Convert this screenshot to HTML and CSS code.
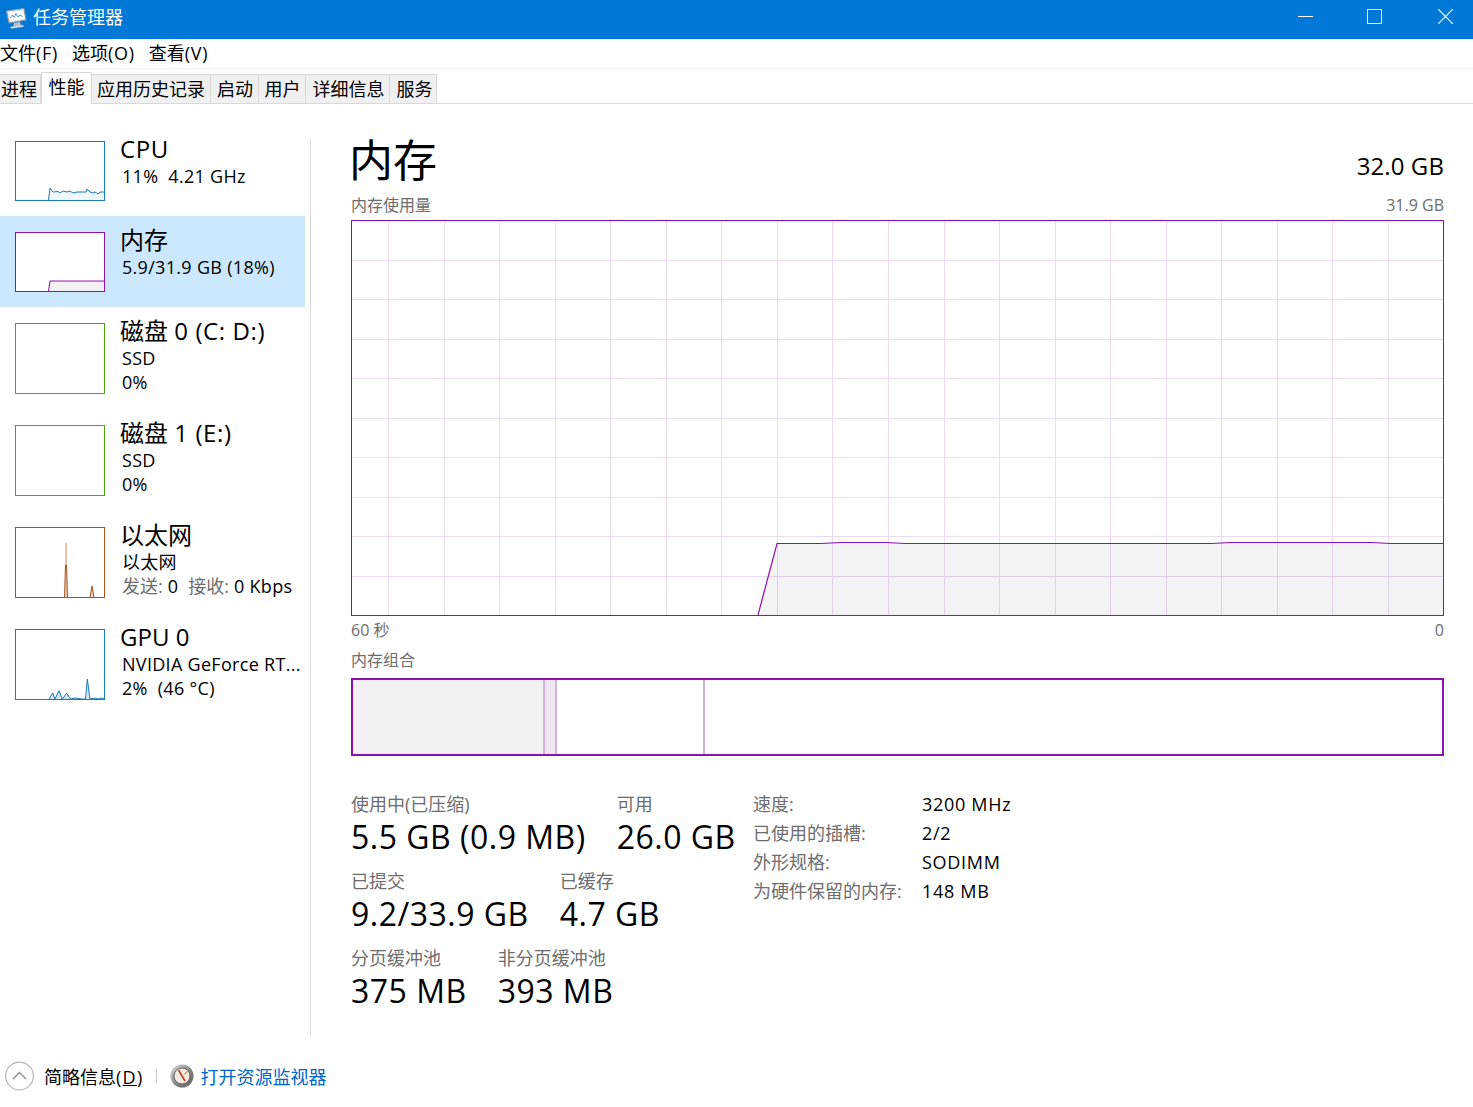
FILE: index.html
```html
<!DOCTYPE html>
<html lang="zh-CN">
<head>
<meta charset="utf-8">
<title>任务管理器</title>
<link rel="stylesheet" href="styles.css">
</head>
<body>
<header class="titlebar">
  <svg class="app-icon" width="22" height="22" viewBox="0 0 22 22">
    <path d="M1.500 4 19 1.500 21 13 4 16Z" fill="#dfe6ee" stroke="#8d99a6"/>
    <path d="M3.500 5.500 17.800 3.500 19.300 11.800 5.200 14.200Z" fill="#fff"/>
    <path d="M5 11 7.500 8 9 10.500 11 6.500 13 10 15 8 17.500 9.500" fill="none" stroke="#4b94d8" stroke-width="1"/>
    <path d="M9 16 15 15 16 18.500 8 20Z" fill="#b9c2cc"/>
    <path d="M5 20 17.500 18 19 19.500 6.500 21.500Z" fill="#eef1f4" stroke="#98a2ad" stroke-width=".5"/>
  </svg>
  <span class="app-title">任务管理器</span>
  <div class="win-controls">
    <svg width="15" height="15" viewBox="0 0 15 15" class="wc-min"><path d="M0 7.500H15" stroke="#fff"/></svg>
    <svg width="15" height="15" viewBox="0 0 15 15" class="wc-max"><rect x=".5" y=".5" width="14" height="14" fill="none" stroke="#fff"/></svg>
    <svg width="15" height="15" viewBox="0 0 15 15" class="wc-close"><path d="M0 0 15 15M15 0 0 15" stroke="#fff" stroke-width="1.200"/></svg>
  </div>
</header>
<nav class="menubar">
  <span>文件<span class="lat-m">(F)</span></span><span>选项<span class="lat-m">(O)</span></span><span>查看<span class="lat-m">(V)</span></span>
</nav>
<div class="tabs">
  <span class="tab t1">进程</span>
  <span class="tab active t2">性能</span>
  <span class="tab t3">应用历史记录</span>
  <span class="tab t4">启动</span>
  <span class="tab t5">用户</span>
  <span class="tab t6">详细信息</span>
  <span class="tab t7">服务</span>
</div>
<div class="content">
  <aside class="sidebar">
    <div class="item">
      <svg class="thumb short" viewBox="0 0 90 60">
        <path class="f-cpu" d="M33.500 59 35 47 38 51 43 50.500 45 52 48 50 52 51 55 50 58 52 62 51 71 51 72 48 75 51 78 52 80 51 83 53 85 51 89 51V59Z"/>
        <path class="l-cpu" d="M33.500 59 35 47 38 51 43 50.500 45 52 48 50 52 51 55 50 58 52 62 51 71 51 72 48 75 51 78 52 80 51 83 53 85 51 89 51"/>
        <rect class="b-cpu" x=".5" y=".5" width="89" height="59"/>
      </svg>
      <div class="info">
        <div class="name lat">CPU</div>
        <div class="sub">11%&nbsp; 4.21 GHz</div>
      </div>
    </div>
    <div class="item selected">
      <svg class="thumb short" viewBox="0 0 90 60">
        <rect x="0" y="0" width="90" height="60" fill="#fff"/>
        <path class="f-mem" d="M33.500 59 35 49H89V59Z"/>
        <path class="l-mem" d="M33.500 59 35 49H89"/>
        <rect class="b-mem" x=".5" y=".5" width="89" height="59"/>
      </svg>
      <div class="info">
        <div class="name">内存</div>
        <div class="sub">5.9/31.9 GB (18%)</div>
      </div>
    </div>
    <div class="item">
      <svg class="thumb tall" viewBox="0 0 90 71"><rect class="b-disk" x=".5" y=".5" width="89" height="70"/></svg>
      <div class="info">
        <div class="name">磁盘 <span class="lat">0 (C: D:)</span></div>
        <div class="sub">SSD</div>
        <div class="sub">0%</div>
      </div>
    </div>
    <div class="item">
      <svg class="thumb tall" viewBox="0 0 90 71"><rect class="b-disk" x=".5" y=".5" width="89" height="70"/></svg>
      <div class="info">
        <div class="name">磁盘 <span class="lat">1 (E:)</span></div>
        <div class="sub">SSD</div>
        <div class="sub">0%</div>
      </div>
    </div>
    <div class="item">
      <svg class="thumb tall" viewBox="0 0 90 71">
        <path class="l-net-light" d="M51 16V42"/>
        <path class="f-net" d="M49.500 70 50.500 38H51.500L52.500 70ZM75 70 77 59 79 70Z"/>
        <path class="l-net" d="M49.500 70 50.500 38M51.500 38 52.500 70M75 70 77 59 79 70"/>
        <rect class="b-net" x=".5" y=".5" width="89" height="70"/>
      </svg>
      <div class="info">
        <div class="name">以太网</div>
        <div class="sub">以太网</div>
        <div class="sub"><span class="muted">发送:</span> 0&nbsp; <span class="muted">接收:</span> 0 Kbps</div>
      </div>
    </div>
    <div class="item">
      <svg class="thumb tall" viewBox="0 0 90 71">
        <path class="f-gpu" d="M34 70 37.700 64 40 70 44 61.700 47.300 70 51.700 64.300 55.700 70 60 69 66.700 70 70.500 70 72.300 50 75 70 80 69 83 70 86.700 69 89 70Z"/>
        <path class="l-cpu" d="M34 70 37.700 64 40 70 44 61.700 47.300 70 51.700 64.300 55.700 70 60 69 66.700 70 70.500 70 72.300 50 75 70 80 69 83 70 86.700 69 89 70"/>
        <rect class="b-cpu" x=".5" y=".5" width="89" height="70"/>
      </svg>
      <div class="info">
        <div class="name">GPU <span class="lat">0</span></div>
        <div class="sub">NVIDIA GeForce RT...</div>
        <div class="sub">2%&nbsp; (46 °C)</div>
      </div>
    </div>
  </aside>
  <main class="main">
    <div class="head">
      <h1>内存</h1>
      <div class="capacity">32.0 GB</div>
    </div>
    <div class="caption-row"><span>内存使用量</span><span>31.9 GB</span></div>
    <svg class="graph" width="1093" height="396" viewBox="0 0 1093 396">
      <path class="grid" d="M37.500 0V396M93.500 0V396M148.500 0V396M204.500 0V396M259.500 0V396M315.500 0V396M370.500 0V396M426.500 0V396M481.500 0V396M537.500 0V396M593.500 0V396M648.500 0V396M704.500 0V396M759.500 0V396M815.500 0V396M870.500 0V396M926.500 0V396M981.500 0V396M1037.500 0V396M0 40.500H1093M0 79.500H1093M0 119.500H1093M0 158.500H1093M0 198.500H1093M0 237.500H1093M0 277.500H1093M0 316.500H1093M0 356.500H1093"/>
      <path class="area" d="M407 395 426 323.500H470L490 322.500H535L555 323.500H860L880 322.500H1020L1040 323.500H1092V395Z"/>
      <path class="line" d="M407 395 426 323.500H470L490 322.500H535L555 323.500H860L880 322.500H1020L1040 323.500H1092"/>
      <rect class="frame" x=".5" y=".5" width="1092" height="395"/>
    </svg>
    <div class="caption-row axis"><span>60 秒</span><span>0</span></div>
    <div class="caption-row comp-title"><span>内存组合</span></div>
    <div class="composition">
      <div class="seg seg-used"></div>
      <div class="seg seg-mod"></div>
      <div class="seg seg-standby"></div>
      <div class="seg seg-free"></div>
    </div>
    <section class="details">
      <div class="stats">
        <div class="stat-row">
          <div class="stat"><div class="label">使用中(已压缩)</div><div class="value">5.5 GB (0.9 MB)</div></div>
          <div class="stat"><div class="label">可用</div><div class="value">26.0 GB</div></div>
        </div>
        <div class="stat-row">
          <div class="stat"><div class="label">已提交</div><div class="value">9.2/33.9 GB</div></div>
          <div class="stat"><div class="label">已缓存</div><div class="value">4.7 GB</div></div>
        </div>
        <div class="stat-row">
          <div class="stat"><div class="label">分页缓冲池</div><div class="value">375 MB</div></div>
          <div class="stat"><div class="label">非分页缓冲池</div><div class="value">393 MB</div></div>
        </div>
      </div>
      <dl class="specs">
        <dt>速度:</dt><dd>3200 MHz</dd>
        <dt>已使用的插槽:</dt><dd>2/2</dd>
        <dt>外形规格:</dt><dd>SODIMM</dd>
        <dt>为硬件保留的内存:</dt><dd>148 MB</dd>
      </dl>
    </section>
  </main>
</div>
<footer class="footer">
  <svg class="chev" width="29" height="30" viewBox="0 0 29 30">
    <circle cx="14.500" cy="15" r="13.900" fill="#fff" stroke="#b5b5b5" stroke-width="1.200"/>
    <path d="M8 18 14.500 11.500 21 18" fill="none" stroke="#8c8c8c" stroke-width="1.300"/>
  </svg>
  <span class="brief">简略信息<span class="lat-d">(<u>D</u>)</span></span>
  <span class="foot-sep"></span>
  <svg class="monitor" width="24" height="24" viewBox="0 0 24 24">
    <defs>
      <linearGradient id="ring" x1="0" y1="0" x2="1" y2="1">
        <stop offset="0" stop-color="#e2e2e2"/>
        <stop offset=".5" stop-color="#8a8a8a"/>
        <stop offset="1" stop-color="#5a5a5a"/>
      </linearGradient>
    </defs>
    <circle cx="12" cy="12" r="11.500" fill="url(#ring)"/>
    <circle cx="12" cy="12" r="8" fill="#f1ebe2" stroke="#666"/>
    <path d="M8.500 6 15 17" stroke="#c0392b" stroke-width="1.600"/>
    <path d="M17.500 7 14.500 10.500" stroke="#d9a25f" stroke-width="1.300"/>
  </svg>
  <a class="link">打开资源监视器</a>
</footer>
</body>
</html>
```
FILE: styles.css
```css
* { box-sizing: border-box; }
html, body { margin: 0; padding: 0; }
body {
  width: 1473px;
  height: 1107px;
  overflow: hidden;
  background: #fff;
  color: #000;
  font-family: "Open Sans", "Noto Sans CJK SC", sans-serif;
  font-size: 18px;
  display: flex;
  flex-direction: column;
}
.titlebar {
  height: 39px;
  flex: none;
  background: #0078d7;
  color: #fff;
  display: flex;
  align-items: center;
  padding-left: 5px;
}
.app-icon { margin-right: 6px; margin-top: -4px; }
.app-title { line-height: 34px; margin-top: -6px; }
.win-controls { margin-left: auto; display: flex; align-items: center; margin-top: -6px; }
.win-controls svg { display: block; }
.wc-min { margin-right: 54px; }
.wc-max { margin-right: 56px; }
.wc-close { margin-right: 20px; }
.menubar {
  height: 30px;
  flex: none;
  border-bottom: 1px solid #f0f0f0;
  display: flex;
  gap: 14px;
  align-items: center;
  line-height: 28px;
  padding-bottom: 2px;
}
.lat-m { letter-spacing: .7px; }
.tabs {
  height: 35px;
  flex: none;
  border-bottom: 1px solid #d9d9d9;
  display: flex;
  align-items: flex-end;
}
.tab {
  height: 29px;
  background: #f0f0f0;
  border: 1px solid #d9d9d9;
  border-left: 0;
  border-bottom: 0;
  display: flex;
  align-items: center;
  justify-content: center;
  line-height: 28px;
  padding-bottom: 1px;
}
.t1 { width: 41px; justify-content: flex-start; padding-left: 1px; }
.t2 { width: 51px; }
.t3 { width: 119px; }
.t4 { width: 48px; padding-left: 1px; }
.t5 { width: 47px; padding-left: 1px; }
.t6 { width: 84px; padding-left: 2px; }
.t7 { width: 47px; padding-left: 3px; }
.tab.active {
  height: 32px;
  background: #fff;
  border-left: 1px solid #d9d9d9;
  margin-bottom: -1px;
  padding-bottom: 4px;
  position: relative;
}
.content {
  flex: 1;
  display: flex;
  min-height: 0;
  padding-top: 21px;
}
.sidebar {
  width: 311px;
  flex: none;
  height: 910px;
  padding-right: 6px;
  background: linear-gradient(#d9d9d9, #d9d9d9) no-repeat 310px 15px / 1px 895px;
}
.item {
  display: flex;
  align-items: flex-start;
  padding: 8px 0 0 15px;
  overflow: hidden;
  background: #fff;
}
.item.selected { background: #cce8ff; }
.thumb { width: 90px; display: block; margin: 8px 0 15px; flex: none; }
.thumb.short { height: 60px; }
.thumb.tall { height: 71px; }
.thumb rect[class^="b-"] { fill: none; shape-rendering: crispEdges; }
.b-cpu { stroke: #1a7cb5; }
.b-mem { stroke: #8b12ae; }
.b-disk { stroke: #4ea60c; }
.b-net { stroke: #a7521b; }
.f-cpu { fill: #f1f6fb; }
.f-gpu { fill: #d5e6f2; }
.l-cpu { fill: none; stroke: #1a7cb5; stroke-width: 1; }
.f-mem { fill: #f3f0f4; }
.l-mem { fill: none; stroke: #8b12ae; stroke-width: 1; }
.f-net { fill: #e9d3c4; }
.l-net { fill: none; stroke: #a7521b; stroke-width: 1; }
.l-net-light { fill: none; stroke: #dd8055; stroke-width: 1; }
.info { margin-left: 15px; min-width: 0; }
.name { font-size: 24px; line-height: 31px; white-space: nowrap; }
.lat { letter-spacing: .6px; }
.sub { font-size: 18px; line-height: 24px; margin-left: 2px; white-space: nowrap; letter-spacing: .3px; }
.muted { color: #6d6d6d; letter-spacing: 0; }
.main {
  width: 1093px;
  margin-left: 40px;
  flex: none;
}
.head {
  display: flex;
  justify-content: space-between;
  align-items: flex-end;
  height: 65px;
  margin-top: 2px;
}
h1 { margin: 0 0 2px -2px; font-size: 44px; font-weight: 400; line-height: 60px; }
.capacity { font-size: 24px; line-height: 32px; margin-bottom: 10px; letter-spacing: .1px; }
.caption-row {
  display: flex;
  justify-content: space-between;
  font-size: 16px;
  line-height: 24px;
  color: #6d6d6d;
  height: 24px;
  margin-top: 1px;
}
.graph { display: block; margin-top: 3px; shape-rendering: crispEdges; }
.grid { fill: none; stroke: #ecdbf2; stroke-width: 1; }
.area { fill: rgba(40, 10, 60, .055); }
.line { fill: none; stroke: #8b12ae; stroke-width: 1.200; shape-rendering: auto; }
.frame { fill: none; stroke: #8b12ae; }
.axis { margin-top: 2px; }
.comp-title { margin-top: 6px; }
.composition {
  height: 78px;
  margin-top: 6px;
  border: 2px solid #8b12ae;
  display: flex;
}
.seg { height: 100%; flex: none; }
.seg-used { width: 190px; background: #f3f0f4; }
.seg-mod { background: #efe6f2; border-left: 2px solid #d2b0da; border-right: 2px solid #d2b0da; width: 14px; }
.seg-standby { width: 148px; border-right: 2px solid #d2b0da; }
.seg-free { flex: 1; }
.details {
  display: flex;
  margin-top: 35px;
}
.stats { width: 402px; flex: none; }
.stat-row { display: flex; gap: 31px; height: 77px; }
.stat { white-space: nowrap; }
.label { font-size: 18px; line-height: 26px; color: #6d6d6d; }
.value { font-size: 32px; line-height: 40px; letter-spacing: .5px; }
.specs {
  margin: -1px 0 0;
  display: grid;
  grid-template-columns: 169px auto;
  grid-auto-rows: 29px;
  align-content: start;
  line-height: 29px;
}
dt { color: #6d6d6d; }
dd { margin: 0; letter-spacing: .7px; }
.footer {
  height: 48px;
  flex: none;
  display: flex;
  align-items: center;
  padding-left: 5px;
  margin-top: auto;
  padding-bottom: 14px;
}
.chev { flex: none; }
.brief { margin-left: 10px; }
.lat-d { letter-spacing: 1.3px; }
.foot-sep { width: 1px; height: 14px; background: #c8c8c8; margin: 0 13px 0 12px; }
.monitor { flex: none; }
.link { color: #0066cc; margin-left: 7px; }
```
